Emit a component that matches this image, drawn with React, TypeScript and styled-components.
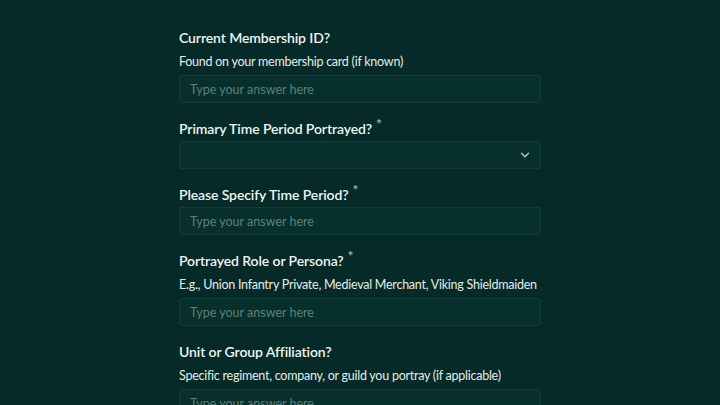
import React from 'react';
import styled, {createGlobalStyle} from "styled-components";
import {ChevronDown} from "lucide-react";

const GlobalStyle = createGlobalStyle`
    html, body {
        margin: 0;
        padding: 0;
        background-color: #062a27;
        font-family: "Lato", "Noto Sans", sans-serif;
    }
`

type FieldProps = {
    title: string;
    required?: boolean;
    hint?: string;
    select?: boolean;
};

const Field = ({title, required, hint, select}: FieldProps) => {
    return (
        <StyledField>
            <FieldTitle>
                {title}
                {required && <Required>*</Required>}
            </FieldTitle>
            {hint && <FieldHint>{hint}</FieldHint>}
            {select ? (
                <SelectBox>
                    <ChevronDown size={14} strokeWidth={2.2}/>
                </SelectBox>
            ) : (
                <TextInput placeholder={"Type your answer here"}/>
            )}
        </StyledField>
    );
};

export default function App() {
    return (
        <>
            <GlobalStyle/>
            <Page>
                <Form>
                    <Field title={"Current Membership ID?"} hint={"Found on your membership card (if known)"}/>
                    <Field title={"Primary Time Period Portrayed?"} required select/>
                    <Field title={"Please Specify Time Period?"} required/>
                    <Field title={"Portrayed Role or Persona?"} required
                           hint={"E.g., Union Infantry Private, Medieval Merchant, Viking Shieldmaiden"}/>
                    <Field title={"Unit or Group Affiliation?"}
                           hint={"Specific regiment, company, or guild you portray (if applicable)"}/>
                </Form>
            </Page>
        </>
    );
}

const Page = styled.div`
    width: 720px;
    height: 405px;
    overflow: hidden;
    padding-top: 28px;
    box-sizing: border-box;
`

const Form = styled.form`
    width: 362px;
    margin: 0 auto;
    display: flex;
    flex-direction: column;
    gap: 16px;
`

const StyledField = styled.div`
    display: flex;
    flex-direction: column;
`

const FieldTitle = styled.div`
    color: #eef5f3;
    font-size: 14px;
    font-weight: 600;
    line-height: 20px;
    margin-bottom: 2px;
    letter-spacing: -0.1px;
    white-space: nowrap;
`

const Required = styled.span`
    position: relative;
    top: -5px;
    color: #9fbab5;
    font-size: 14px;
    line-height: 0;
    margin-left: 4px;
`

const FieldHint = styled.div`
    color: #e3ece9;
    font-size: 12.5px;
    line-height: 18px;
    letter-spacing: -0.25px;
    margin-top: 3px;
    margin-bottom: 4px;
    white-space: nowrap;
`

const TextInput = styled.input`
    box-sizing: border-box;
    height: 28px;
    width: 100%;
    margin: 0;
    padding: 0 10px;
    background-color: #072f2b;
    border: 1px solid #0f3d38;
    border-radius: 3px;
    color: #eef5f3;
    font-family: inherit;
    font-size: 12.5px;
    outline: none;

    &::placeholder {
        color: #5c807a;
    }
`

const SelectBox = styled.div`
    box-sizing: border-box;
    height: 28px;
    display: flex;
    align-items: center;
    justify-content: flex-end;
    padding: 0 8px;
    background-color: #072f2b;
    border: 1px solid #0f3d38;
    border-radius: 3px;
    color: #b6cfca;
`
